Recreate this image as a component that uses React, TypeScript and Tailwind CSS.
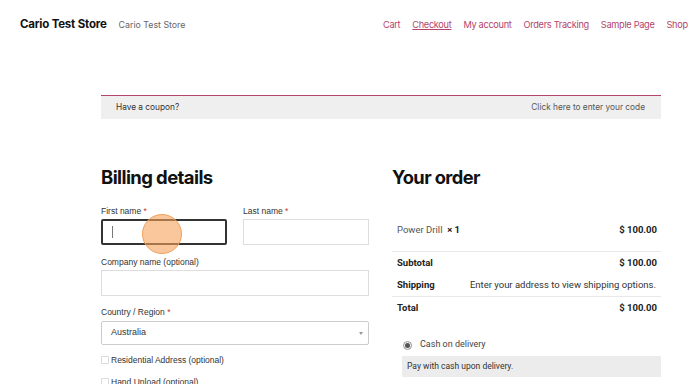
import React from "react";

const navLinks = ["Cart", "Checkout", "My account", "Orders Tracking", "Sample Page", "Shop"];

const Label = ({ text, required }: { text: string; required?: boolean }) => (
  <label className="block h-[10px] text-[8.5px] leading-[10px] text-[#333]">
    {text}
    {required && <span className="text-[#c0392b]"> *</span>}
  </label>
);

const App = () => {
  return (
    <div className="w-[688px] h-[384px] overflow-hidden bg-white relative">
      {/* header */}
      <header className="flex items-center h-[50px] pl-[20px] whitespace-nowrap font-['Inter',sans-serif]">
        <div className="w-[363px] shrink-0 flex items-baseline gap-[12px]">
          <span className="text-[11.5px] font-bold tracking-[-0.2px] text-[#111]">Cario Test Store</span>
          <span className="text-[8.8px] text-[#666]">Cario Test Store</span>
        </div>
        <nav className="flex shrink-0 gap-[12px] text-[9.2px] tracking-[-0.3px] text-[#b3446c]">
          {navLinks.map((l) => (
            <a key={l} href="#" className={l === "Checkout" ? "underline" : ""}>
              {l}
            </a>
          ))}
        </nav>
      </header>

      <main className="ml-[101px] w-[560px]">
        {/* coupon */}
        <div className="mt-[45px] flex items-center justify-between h-[24px] border-t border-[#b3446c] bg-[#efefef] px-[15px] text-[8.3px] text-[#333] font-['Inter',sans-serif]">
          <span>Have a coupon?</span>
          <span className="mr-[1px] text-[#555]">Click here to enter your code</span>
        </div>

        <div className="mt-[46px] flex gap-[23px]">
          {/* billing */}
          <section className="w-[268px]">
            <h2 className="h-[24px] text-[18.5px] leading-[24px] font-bold tracking-[-0.6px] text-[#111] font-['Inter',sans-serif]">
              Billing details
            </h2>
            <div className="mt-[17px] font-['Liberation_Sans',Arial,sans-serif]">
              <div className="flex gap-[16px]">
                <div className="w-[126px]">
                  <Label text="First name" required />
                  <div className="mt-[3px] h-[26px] rounded-[2px] border-2 border-[#333] flex items-center pl-[9px]">
                    <span className="w-px h-[12px] bg-[#777]" />
                  </div>
                </div>
                <div className="w-[126px]">
                  <Label text="Last name" required />
                  <div className="mt-[3px] h-[26px] border border-[#ddd]" />
                </div>
              </div>
              <div className="mt-[12px]">
                <Label text="Company name (optional)" />
                <div className="mt-[3px] h-[26px] border border-[#ddd]" />
              </div>
              <div className="mt-[11px]">
                <Label text="Country / Region" required />
                <div className="mt-[4px] h-[24px] border border-[#ccc] rounded-[2px] flex items-center justify-between pl-[9px] pr-[5px] text-[9px] text-[#333]">
                  <span>Australia</span>
                  <span className="w-0 h-0 border-l-[2.5px] border-r-[2.5px] border-t-[3px] border-l-transparent border-r-transparent border-t-[#999]" />
                </div>
              </div>
              <div className="mt-[10px] flex items-center gap-[2px] h-[10px] text-[8.5px] text-[#333]">
                <span className="w-[8px] h-[8px] border border-[#ddd]" />
                <span>Residential Address (optional)</span>
              </div>
              <div className="mt-[12px] flex items-center gap-[2px] h-[10px] text-[8.5px] text-[#333]">
                <span className="w-[8px] h-[8px] border border-[#ddd]" />
                <span>Hand Unload (optional)</span>
              </div>
            </div>
          </section>

          {/* order */}
          <section className="w-[269px]">
            <h2 className="h-[24px] text-[18.3px] leading-[24px] font-bold tracking-[-0.6px] text-[#111] font-['Inter',sans-serif]">
              Your order
            </h2>
            <div className="mt-[21px] font-['Roboto',sans-serif] text-[9.5px]">
              <div className="h-[42px] flex items-center justify-between pl-[5px] pr-[4px] border-b border-[#e8e8e8]">
                <span className="text-[#555]">
                  Power Drill <strong className="text-[#222]">&nbsp;× 1</strong>
                </span>
                <span className="font-bold text-[#222]">$ 100.00</span>
              </div>
              <div className="h-[23px] flex items-center justify-between pl-[5px] pr-[4px] text-[#222]">
                <span className="font-bold">Subtotal</span>
                <span className="font-bold">$ 100.00</span>
              </div>
              <div className="h-[22px] flex items-center justify-between pl-[5px] pr-[5px] text-[#222] border-b border-[#e8e8e8]">
                <span className="font-bold">Shipping</span>
                <span className="text-[#333]">Enter your address to view shipping options.</span>
              </div>
              <div className="h-[22px] flex items-center justify-between pl-[5px] pr-[4px] text-[#222]">
                <span className="font-bold">Total</span>
                <span className="font-bold">$ 100.00</span>
              </div>

              <div className="mt-[21px] ml-[11px] flex items-center gap-[8px] h-[10px] text-[9px] text-[#444]">
                <span className="w-[9px] h-[9px] rounded-full border border-[#999] bg-[#eee] flex items-center justify-center">
                  <span className="w-[5px] h-[5px] rounded-full bg-[#555]" />
                </span>
                <span>Cash on delivery</span>
              </div>
              <div className="mt-[6px] ml-[10px] h-[21px] bg-[#ececec] flex items-center pl-[5px] text-[8.5px] text-[#333]">
                Pay with cash upon delivery.
              </div>
            </div>
          </section>
        </div>
      </main>

      {/* click indicator */}
      <div className="absolute left-[142px] top-[214px] w-[40px] h-[40px] rounded-full bg-[#f7a25c]/60 border border-[#f0a05a]" />
    </div>
  );
};

export default App;
